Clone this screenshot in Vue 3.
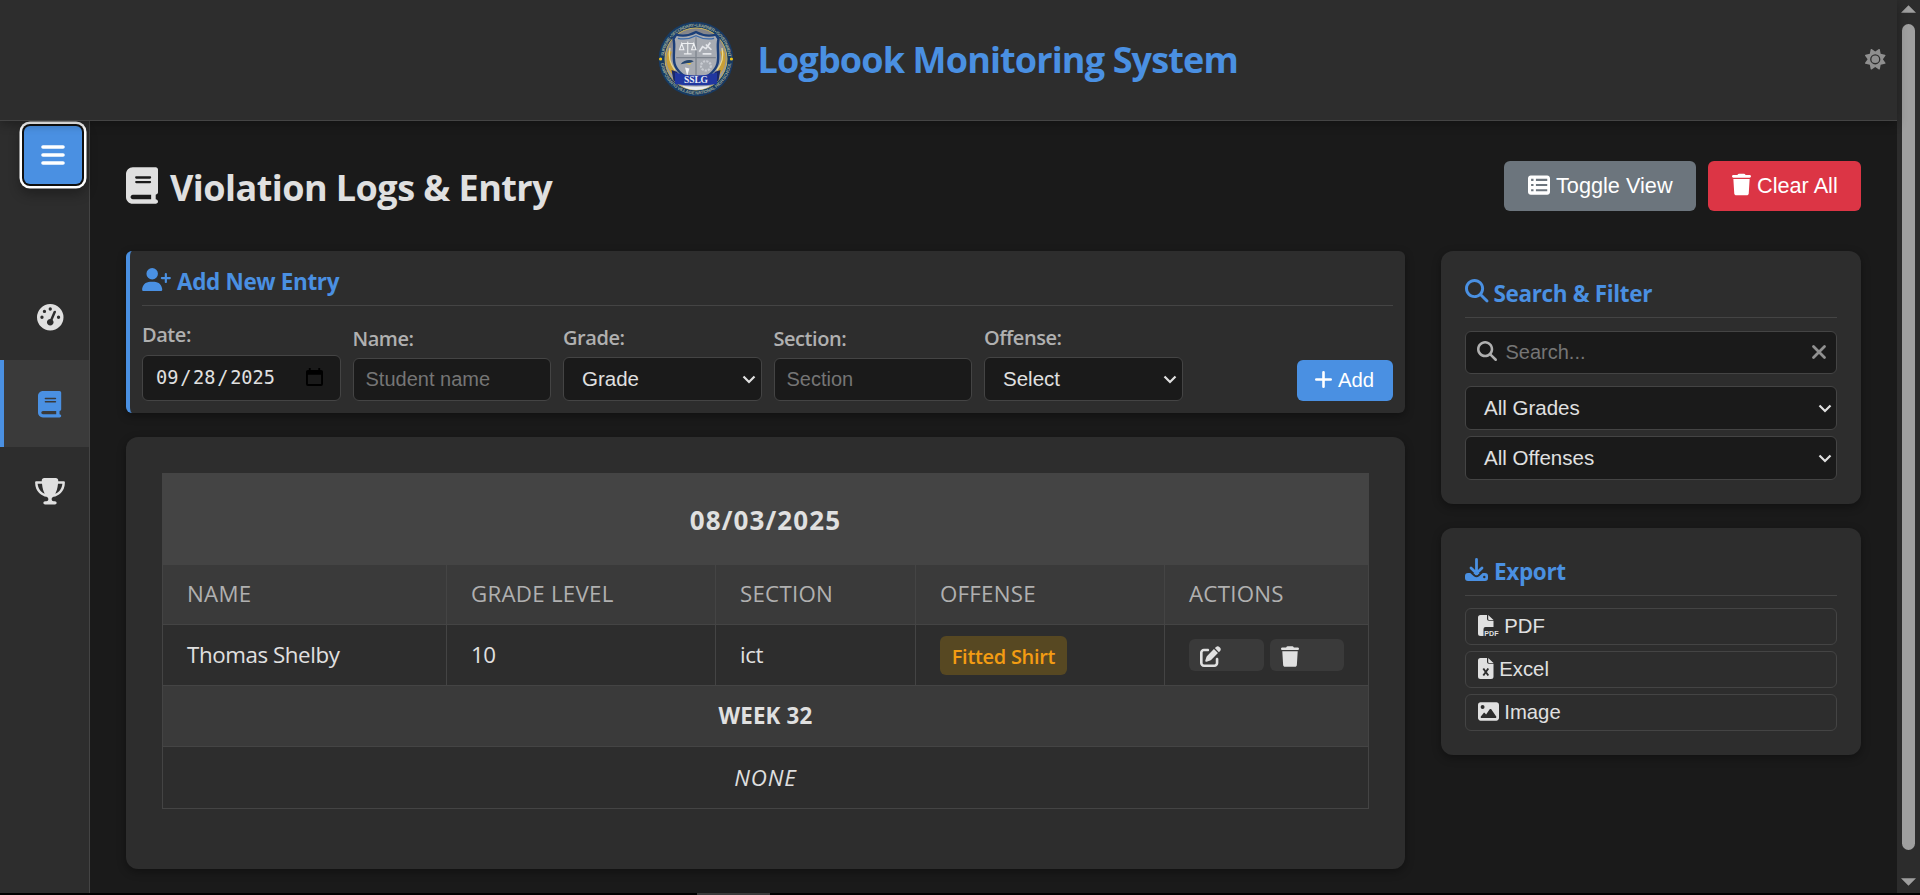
<script setup>
const paths = {
  book: { w: 448, d: 'M96 0C43 0 0 43 0 96V416c0 53 43 96 96 96H384h32c17.7 0 32-14.3 32-32s-14.3-32-32-32V384c17.7 0 32-14.3 32-32V32c0-17.7-14.3-32-32-32H384 96zm0 384H352v64H96c-17.7 0-32-14.3-32-32s14.3-32 32-32zm32-240c0-8.8 7.2-16 16-16H336c8.8 0 16 7.2 16 16s-7.2 16-16 16H144c-8.8 0-16-7.2-16-16zm16 48H336c8.8 0 16 7.2 16 16s-7.2 16-16 16H144c-8.8 0-16-7.2-16-16s7.2-16 16-16z' },
  gauge: { w: 512, d: 'M0 256a256 256 0 1 1 512 0A256 256 0 1 1 0 256zM288 96a32 32 0 1 0 -64 0 32 32 0 1 0 64 0zM256 416c35.3 0 64-28.7 64-64c0-17.4-6.9-33.1-18.1-44.6L366 161.7c5.3-12.1-.2-26.3-12.3-31.6s-26.3 .2-31.6 12.3L257.9 288c-.6 0-1.3 0-1.9 0c-35.3 0-64 28.7-64 64s28.7 64 64 64zM176 144a32 32 0 1 0 -64 0 32 32 0 1 0 64 0zM96 288a32 32 0 1 0 0-64 32 32 0 1 0 0 64zm352-32a32 32 0 1 0 -64 0 32 32 0 1 0 64 0z' },
  trophy: { w: 576, d: 'M400 0H176c-26.5 0-48.1 21.8-47.1 48.2c.2 5.3 .4 10.6 .7 15.8H24C10.7 64 0 74.7 0 88c0 92.6 33.5 157 78.5 200.7c44.3 43.1 98.3 64.8 138.1 75.8c23.4 6.5 39.4 26 39.4 45.6c0 20.9-17 37.9-37.9 37.9H192c-17.7 0-32 14.3-32 32s14.3 32 32 32H384c17.7 0 32-14.3 32-32s-14.3-32-32-32H357.9C337 448 320 431 320 410.1c0-19.6 15.9-39.2 39.4-45.6c39.9-11 93.9-32.7 138.2-75.8C542.5 245 576 180.6 576 88c0-13.3-10.7-24-24-24H446.4c.3-5.2 .5-10.4 .7-15.8C448.1 21.8 426.5 0 400 0zM48.9 112h84.4c9.1 90.1 29.2 150.3 51.9 190.6c-24.9-11-50.8-26.5-73.2-48.3c-32-31.1-58-76-63-142.3zM464.1 254.3c-22.4 21.8-48.3 37.3-73.2 48.3c22.7-40.3 42.8-100.5 51.9-190.6h84.4c-5.1 66.3-31.1 111.2-63 142.3z' },
  sun: { w: 512, d: 'M361.5 1.2c5 2.1 8.6 6.6 9.6 11.9L391 121l107.9 19.8c5.3 1 9.8 4.6 11.9 9.6s1.5 10.7-1.6 15.2L446.9 256l62.3 90.3c3.1 4.5 3.7 10.2 1.6 15.2s-6.6 8.6-11.9 9.6L391 391 371.1 498.9c-1 5.3-4.6 9.8-9.6 11.9s-10.7 1.5-15.2-1.6L256 446.9l-90.3 62.3c-4.5 3.1-10.2 3.7-15.2 1.6s-8.6-6.6-9.6-11.9L121 391 13.1 371.1c-5.3-1-9.8-4.6-11.9-9.6s-1.5-10.7 1.6-15.2L65.1 256 2.8 165.7c-3.1-4.5-3.7-10.2-1.6-15.2s6.6-8.6 11.9-9.6L121 121 140.9 13.1c1-5.3 4.6-9.8 9.6-11.9s10.7-1.5 15.2 1.6L256 65.1 346.3 2.8c4.5-3.1 10.2-3.7 15.2-1.6zM160 256a96 96 0 1 1 192 0 96 96 0 1 1 -192 0zm224 0a128 128 0 1 0 -256 0 128 128 0 1 0 256 0z' },
  userPlus: { w: 640, d: 'M96 128a128 128 0 1 1 256 0A128 128 0 1 1 96 128zM0 482.3C0 383.8 79.8 304 178.3 304h91.4C368.2 304 448 383.8 448 482.3c0 16.4-13.3 29.7-29.7 29.7H29.7C13.3 512 0 498.7 0 482.3zM504 312V248H440c-13.3 0-24-10.7-24-24s10.7-24 24-24h64V136c0-13.3 10.7-24 24-24s24 10.7 24 24v64h64c13.3 0 24 10.7 24 24s-10.7 24-24 24H552v64c0 13.3-10.7 24-24 24s-24-10.7-24-24z' },
  search: { w: 512, d: 'M416 208c0 45.9-14.9 88.3-40 122.7L502.6 457.4c12.5 12.5 12.5 32.8 0 45.3s-32.8 12.5-45.3 0L330.7 376c-34.4 25.2-76.8 40-122.7 40C93.1 416 0 322.9 0 208S93.1 0 208 0S416 93.1 416 208zM208 352a144 144 0 1 0 0-288 144 144 0 1 0 0 288z' },
  trash: { w: 448, d: 'M135.2 17.7L128 32H32C14.3 32 0 46.3 0 64S14.3 96 32 96H416c17.7 0 32-14.3 32-32s-14.3-32-32-32H320l-7.2-14.3C307.4 6.8 296.3 0 284.2 0H163.8c-12.1 0-23.2 6.8-28.6 17.7zM416 128H32L53.2 467c1.6 25.3 22.6 45 47.9 45H346.9c25.3 0 46.3-19.7 47.9-45L416 128z' },
  edit: { w: 512, d: 'M471.6 21.7c-21.9-21.9-57.3-21.9-79.2 0L362.3 51.7l97.9 97.9 30.1-30.1c21.9-21.9 21.9-57.3 0-79.2L471.6 21.7zm-299.2 220c-6.1 6.1-10.8 13.6-13.5 21.9l-29.6 88.8c-2.9 8.6-.6 18.1 5.8 24.6s15.9 8.7 24.6 5.8l88.8-29.6c8.2-2.7 15.7-7.4 21.9-13.5L437.7 172.3 339.7 74.3 172.4 241.7zM96 64C43 64 0 107 0 160V416c0 53 43 96 96 96H352c53 0 96-43 96-96V320c0-17.7-14.3-32-32-32s-32 14.3-32 32v96c0 17.7-14.3 32-32 32H96c-17.7 0-32-14.3-32-32V160c0-17.7 14.3-32 32-32h96c17.7 0 32-14.3 32-32s-14.3-32-32-32H96z' },
  image: { w: 512, d: 'M0 96C0 60.7 28.7 32 64 32H448c35.3 0 64 28.7 64 64V416c0 35.3-28.7 64-64 64H64c-35.3 0-64-28.7-64-64V96zM323.8 202.5c-4.5-6.6-11.9-10.5-19.8-10.5s-15.4 3.9-19.8 10.5l-87 127.6L170.7 297c-4.6-5.7-11.5-9-18.7-9s-14.2 3.3-18.7 9l-64 80c-5.8 7.2-6.9 17.1-2.9 25.4s12.4 13.6 21.6 13.6h96 32H424c8.9 0 17.1-4.9 21.2-12.8s3.6-17.4-1.4-24.7l-120-176zM112 192a48 48 0 1 0 0-96 48 48 0 1 0 0 96z' },
  list: { w: 512, d: 'M64 32H448c35 0 64 29 64 64V416c0 35-29 64-64 64H64c-35 0-64-29-64-64V96c0-35 29-64 64-64zM72 112v48h56v-48zM184 112v48h264v-48zM72 232v48h56v-48zM184 232v48h264v-48zM72 352v48h56v-48zM184 352v48h264v-48z' },
}
const nav = ['gauge', 'book', 'trophy']
const headers = ['NAME', 'GRADE LEVEL', 'SECTION', 'OFFENSE', 'ACTIONS']
const filters = ['All Grades', 'All Offenses']
</script>

<template>
  <div class="screen">
    <div class="app">
      <header class="topbar">
        <svg class="logo" viewBox="0 0 76 76">
          <defs>
            <radialGradient id="disc" cx="50%" cy="65%" r="60%">
              <stop offset="0" stop-color="#d2d3d8" />
              <stop offset="1" stop-color="#858589" />
            </radialGradient>
            <path id="arcTop" d="M5.800 38a32.200 32.200 0 0 1 64.400 0" />
            <path id="arcBottom" d="M2.600 38a35.400 35.400 0 0 0 70.800 0" />
          </defs>
          <circle cx="38" cy="38" r="37.300" fill="#173a63" />
          <circle cx="38" cy="38" r="31" fill="url(#disc)" stroke="#c9b35a" stroke-width="1" />
          <text class="ring"><textPath href="#arcTop" textLength="96" startOffset="3">SUPREME • SECONDARY • LEARNER • GOVERNMENT</textPath></text>
          <text class="ring"><textPath href="#arcBottom" textLength="103" startOffset="4">CAMPOSANTO VILLAGE NATIONAL HIGH SCHOOL</textPath></text>
          <circle cx="2.600" cy="38" r="1.600" fill="#f0c419" />
          <circle cx="73.400" cy="38" r="1.600" fill="#f0c419" />
          <path d="M12 30c-4 10 0 21 8 25M64 30c4 10 0 21-8 25" fill="none" stroke="#c99f35" stroke-width="4" />
          <path d="M12 27c-2 9 1 17 5 22M64 27c2 9-1 17-5 22" fill="none" stroke="#ead98b" stroke-width="1.300" />
          <g transform="translate(38 36) scale(1.1 1.04) translate(-38 -36)">
            <path d="M20 14.500c6 2 12 1 18-2.500c6 3.500 12 4.500 18 2.500l2.500 4c-2 8 1 16-1 24c-2 8-11 14-19.500 18c-8.500-4-17.500-10-19.500-18c-2-8 1-16-1-24z" fill="#a7abb2" stroke="#1c3f78" stroke-width="2.200" />
            <path d="M21.500 18c6 1.500 11 .5 16.500-2.500c5.500 3 10.500 4 16.500 2.500" fill="none" stroke="#3c6aa8" stroke-width="1.200" />
            <path d="M38 17v40M20 36.500h36" stroke="#7f858e" stroke-width="1.200" />
            <path d="M30.500 21v12M27 33h7M25 23h11M25 23l-2 6h4zM36 23l-2 6h4z" stroke="#eef0f2" stroke-width="1" fill="none" />
            <path d="M41 31l3-5 3 2 4-6M44 33h8M47 24l5 5" stroke="#e4e6ea" stroke-width="1.600" fill="none" />
            <path d="M24 43c3-4 8-5 12-3l-3 1.500c-3 0-5 1-9 1.500z" fill="#26466e" />
            <path d="M29 42.500l5-1-1.500 2z" fill="#e8c33c" />
            <path d="M28 46l4 1-2 7z" fill="#f2f3f5" />
            <circle cx="47" cy="44.500" r="4.500" fill="none" stroke="#c9ccd2" stroke-width="2" stroke-dasharray="2 1" />
          </g>
          <path d="M13.500 49l6 2v12l-4-3.500zM62.500 49l-6 2v12l4-3.500z" fill="#1a2868" />
          <path d="M17 51.500q21 6 42 0V63q-21 3-42 0z" fill="#2137a0" />
          <text x="38" y="62.300" class="banner" textLength="24">SSLG</text>
          <path d="M24 65q14 1.500 28 0q-6 4-14 4t-14-4z" fill="#e9ebf0" />
        </svg>
        <h1>Logbook Monitoring System</h1>
        <svg class="sun" viewBox="0 0 512 512"><path :d="paths.sun.d" /></svg>
      </header>

      <div class="body">
        <aside class="sidebar">
          <button class="burger">
            <svg viewBox="0 0 24 20"><path d="M2 2h20M2 10h20M2 18h20" /></svg>
          </button>
          <nav>
            <a v-for="n in nav" :key="n" :class="['item', n, { active: n === 'book' }]">
              <svg :viewBox="`0 0 ${paths[n].w} 512`"><path :d="paths[n].d" fill-rule="evenodd" /></svg>
            </a>
          </nav>
        </aside>

        <main>
          <div class="head">
            <svg class="head-icon" viewBox="0 0 448 512"><path :d="paths.book.d" /></svg>
            <h2>Violation Logs &amp; Entry</h2>
            <button class="btn grey">
              <svg class="i-list" viewBox="0 32 512 448"><path :d="paths.list.d" fill-rule="evenodd" /></svg><span>Toggle View</span>
            </button>
            <button class="btn red">
              <svg class="i-trash" viewBox="0 0 448 512"><path :d="paths.trash.d" /></svg><span>Clear All</span>
            </button>
          </div>

          <div class="columns">
            <div class="left">
              <section class="card form">
                <h3>
                  <svg class="i-user" viewBox="0 0 640 512"><path :d="paths.userPlus.d" /></svg><span>Add New Entry</span>
                </h3>
                <div class="fields">
                  <div class="field">
                    <label>Date:</label>
                    <div class="control date">
                      <span>09</span><i>/</i><span>28</span><i>/</i><span>2025</span>
                      <svg viewBox="0 0 18 20"><path d="M3 0h2v2h8V0h2v2h1a2 2 0 0 1 2 2v13a2 2 0 0 1-2 2H2a2 2 0 0 1-2-2V4a2 2 0 0 1 2-2h1zM2 7v10h14V7z" fill-rule="evenodd" /></svg>
                    </div>
                  </div>
                  <div class="field">
                    <label>Name:</label>
                    <div class="control input">Student name</div>
                  </div>
                  <div class="field">
                    <label>Grade:</label>
                    <div class="control select">Grade<svg viewBox="0 0 14 9"><path d="M1.500 1.500L7 7l5.500-5.500" /></svg></div>
                  </div>
                  <div class="field">
                    <label>Section:</label>
                    <div class="control input">Section</div>
                  </div>
                  <div class="field">
                    <label>Offense:</label>
                    <div class="control select">Select<svg viewBox="0 0 14 9"><path d="M1.500 1.500L7 7l5.500-5.500" /></svg></div>
                  </div>
                  <button class="add">
                    <svg viewBox="0 0 17 17"><path d="M8.500 1.300v14.400M1.300 8.500h14.400" /></svg><span>Add</span>
                  </button>
                </div>
              </section>

              <section class="card log">
                <table>
                  <colgroup>
                    <col class="c1"><col class="c2"><col class="c3"><col class="c4"><col class="c5">
                  </colgroup>
                  <tbody>
                    <tr class="r-date"><td colspan="5"><span>08/03/2025</span></td></tr>
                    <tr class="r-head"><th v-for="h in headers" :key="h">{{ h }}</th></tr>
                    <tr class="r-row">
                      <td><span>Thomas Shelby</span></td>
                      <td>10</td>
                      <td>ict</td>
                      <td><div class="badge">Fitted Shirt</div></td>
                      <td>
                        <div class="actions">
                          <button class="mini"><svg class="m-edit" viewBox="0 0 512 512"><path :d="paths.edit.d" /></svg></button>
                          <button class="mini"><svg class="m-trash" viewBox="0 0 448 512"><path :d="paths.trash.d" /></svg></button>
                        </div>
                      </td>
                    </tr>
                    <tr class="r-week"><td colspan="5"><span>WEEK 32</span></td></tr>
                    <tr class="r-none"><td colspan="5"><span>NONE</span></td></tr>
                  </tbody>
                </table>
              </section>
            </div>

            <div class="right">
              <section class="card side search-card">
                <h3>
                  <svg class="i-search" viewBox="0 0 512 512"><path :d="paths.search.d" /></svg><span>Search &amp; Filter</span>
                </h3>
                <div class="control search">
                  <svg class="mag" viewBox="0 0 512 512"><path :d="paths.search.d" /></svg>
                  <span>Search...</span>
                  <svg class="x" viewBox="0 0 14 14"><path d="M1.500 1.500l11 11M12.500 1.500l-11 11" /></svg>
                </div>
                <div v-for="f in filters" :key="f" class="control select">{{ f }}<svg viewBox="0 0 14 9"><path d="M1.500 1.500L7 7l5.500-5.500" /></svg></div>
              </section>

              <section class="card side export-card">
                <h3>
                  <svg class="i-down" viewBox="0 0 23 23">
                    <path d="M3 15h17a3 3 0 0 1 3 3v2a3 3 0 0 1-3 3H3a3 3 0 0 1-3-3v-2a3 3 0 0 1 3-3z" />
                    <path class="cut" d="M4.500 13l5 4.500q2 1.500 4 0l5-4.500" />
                    <path class="arrow" d="M11.500 1.500v13.500M6 10l5.500 5.300L17 10" />
                    <circle class="dot" cx="19.300" cy="19" r="1.200" />
                  </svg><span>Export</span>
                </h3>
                <button class="export">
                  <svg class="f-pdf" viewBox="0 0 21 21">
                    <path d="M2.500 0H9v4a1.800 1.800 0 0 0 1.800 1.800H15.500V12H7.500A2 2 0 0 0 5.500 14v7H2.500A2.500 2.500 0 0 1 0 18.500v-16A2.500 2.500 0 0 1 2.500 0zM10.200 0l5.300 5h-4.300a1 1 0 0 1-1-1z" />
                    <text x="6.300" y="20.600" textLength="14.200" lengthAdjust="spacingAndGlyphs">PDF</text>
                  </svg><span>PDF</span>
                </button>
                <button class="export">
                  <svg class="f-xls" viewBox="0 0 16 21">
                    <path d="M2.500 0H9v4a1.800 1.800 0 0 0 1.800 1.800H15.500V18.500a2.500 2.500 0 0 1-2.500 2.500H2.500A2.500 2.500 0 0 1 0 18.500v-16A2.500 2.500 0 0 1 2.500 0zM10.200 0l5.300 5h-4.300a1 1 0 0 1-1-1z" />
                    <path class="xx" d="M5.300 10.500l5 7M10.300 10.500l-5 7" />
                  </svg><span>Excel</span>
                </button>
                <button class="export">
                  <svg class="f-img" viewBox="0 32 512 448"><path :d="paths.image.d" fill-rule="evenodd" /></svg><span>Image</span>
                </button>
              </section>
            </div>
          </div>
        </main>
      </div>
      <div class="scrollbar">
        <svg viewBox="0 0 16 8"><path d="M0 8L8 0l8 8z" /></svg>
        <div class="thumb"></div>
        <svg class="down" viewBox="0 0 16 8"><path d="M0 0h16L8 8z" /></svg>
      </div>
    </div>
    <div class="edge"><div></div></div>
  </div>
</template>

<style>
html, body { background: #000; overflow: hidden; }
</style>

<style scoped>
* { box-sizing: border-box; }
.screen { width: 1920px; height: 895px; font-family: "Open Sans", "Noto Sans", sans-serif; color: #e0e0e0; background: #000; overflow: hidden; }
.app { display: grid; grid-template-columns: 1897px 23px; grid-template-rows: 121px 772px; background: #1a1a1a; }
svg { display: block; fill: currentColor; flex: none; overflow: visible; }
h1, h2, h3 { margin: 0; white-space: nowrap; }
button { border: 0; margin: 0; padding: 0; color: inherit; font: inherit; }

.topbar { position: relative; z-index: 2; grid-column: 1; background: #2d2d2d; border-bottom: 1px solid #444; box-shadow: 0 3px 10px rgba(0,0,0,.3); display: flex; align-items: center; justify-content: center; gap: 24px; padding-bottom: 3px; }
.logo { width: 76px; height: 76px; }
.ring { font: bold 4.500px "Liberation Sans", sans-serif; fill: #9aa593; }
.banner { font: bold 9.500px "Liberation Serif", serif; fill: #e8ecf7; text-anchor: middle; }
h1 { font-size: 36px; line-height: 48px; font-weight: 700; letter-spacing: -.860px; color: #4a90e2; width: 482px; padding-top: 3px; }
.sun { position: absolute; right: 12px; top: 48.500px; width: 20.500px; height: 20.500px; color: #8f8f8f; }

.body { grid-column: 1; display: flex; }
.sidebar { width: 90px; flex: none; background: #2d2d2d; border-right: 1px solid #444; }
.burger { margin: 4.500px 0 0 24px; width: 58px; height: 58px; border-radius: 6px; background: #4a90e2; color: #fff; display: flex; align-items: center; justify-content: center; box-shadow: 0 0 0 2px #101010, 0 0 0 4.500px #fff, 0 6px 12px 4px rgba(0,0,0,.3); }
.burger svg { width: 24px; height: 20px; stroke: currentColor; stroke-width: 3.600; stroke-linecap: round; }
nav { margin-top: 89.500px; }
.item { height: 87px; border-left: 4px solid transparent; padding-left: 7px; display: flex; align-items: center; justify-content: center; }
.item.active { background: #3a3a3a; border-color: #4a90e2; color: #4a90e2; }
.item svg { height: 26.500px; position: relative; top: .5px; }
.item.trophy svg { width: 30px; }

main { flex: 1; padding: 40px 36px 0; }
.head { display: flex; align-items: center; height: 50px; }
.head-icon { width: 32px; height: 37px; margin-top: -1px; }
h2 { margin-left: 12px; flex: 1; font-size: 36px; line-height: 48px; font-weight: 700; letter-spacing: -.550px; padding-top: 3px; }
.btn { height: 50px; border-radius: 6px; color: #fff; font: 21.700px/28px "Liberation Sans", Arial, sans-serif; display: flex; align-items: center; padding: 0 24px; gap: 6px; white-space: nowrap; }
.btn.grey { width: 192px; background: #6c757d; margin-right: 12px; }
.btn.red { width: 153px; background: #dc3545; }
.i-list { width: 22px; height: 20px; margin-top: -2px; }
.i-trash { width: 19px; height: 23px; margin-top: -3px; }

.columns { display: flex; gap: 36px; margin-top: 40px; align-items: flex-start; }
.left { width: 1279px; display: flex; flex-direction: column; gap: 24px; }
.right { width: 420px; display: flex; flex-direction: column; gap: 24px; }
.card { background: #2d2d2d; box-shadow: 0 3px 8px rgba(0,0,0,.35); }
.form { height: 162px; border-left: 4px solid #4a90e2; border-radius: 6px; padding: 12px; }
h3 { display: flex; align-items: center; font-size: 22.500px; font-weight: 700; letter-spacing: -.350px; color: #4a90e2; border-bottom: 1px solid #444; }
h3 span { position: relative; top: 1.300px; }
.form h3 { height: 43px; padding-bottom: 7px; }
.i-user { width: 29px; height: 23px; margin: -3px 6px 0 0; }

.fields { display: flex; align-items: flex-end; gap: 12px; height: 95px; }
.field { width: 198.500px; }
label { display: block; font-size: 20px; line-height: 27px; font-weight: 600; letter-spacing: -.450px; color: #b0b0b0; margin-bottom: 6.500px; }
.control { border: 1.500px solid #444; border-radius: 6px; background: #1a1a1a; font: 20px/40px "Liberation Sans", Arial, sans-serif; height: 43px; padding: 0 12px; color: #757575; white-space: nowrap; }
.control.select { height: 44px; padding: 0 4.500px 0 18px; color: #e0e0e0; font-size: 20.500px; display: flex; align-items: center; justify-content: space-between; }
.control.select svg { width: 14px; height: 9px; fill: none; stroke: #e0e0e0; stroke-width: 2.200; }
.control.date { height: 46.500px; display: flex; align-items: center; font: 18.600px/44px "DejaVu Sans Mono", monospace; color: #e0e0e0; padding: 0 17px 0 13px; }
.date i { font-style: normal; margin: 0 1.600px 0 1.900px; }
.date svg { width: 17px; height: 19px; margin-left: auto; color: #000; margin-top: -1px; }
.add { margin-left: auto; width: 96px; height: 41px; border-radius: 6px; background: #4a90e2; color: #fff; display: flex; align-items: center; padding-left: 18px; gap: 6px; font: 20.300px/24px "Liberation Sans", Arial, sans-serif; }
.add svg { width: 17px; height: 17px; stroke: #fff; stroke-width: 2.600; stroke-linecap: round; margin-top: -2px; }
.add span { margin-top: -1px; }

.log { height: 432px; border-radius: 12px; padding: 36px; }
table { width: 1207px; border-collapse: collapse; table-layout: fixed; font-size: 22.300px; line-height: 30px; }
.c1 { width: 284px; } .c2 { width: 269px; } .c3 { width: 200px; } .c4 { width: 249px; } .c5 { width: 204px; }
td, th { border: 1px solid #444; padding: 0 0 0 24px; text-align: left; font-weight: 400; white-space: nowrap; }
td[colspan] { text-align: center; padding: 0; }
.r-date { height: 91px; background: #444; font-size: 26px; letter-spacing: 1.100px; }
.r-date td { font-weight: 700; padding-top: 1px; }
.r-head { height: 60px; background: #3a3a3a; }
.r-head th { color: #b0b0b0; font-weight: 500; letter-spacing: .250px; padding-bottom: 1px; }
.r-row { height: 61px; letter-spacing: -.400px; }
.r-week { height: 61px; background: #3a3a3a; }
.r-week td { font-weight: 700; letter-spacing: .200px; }
.r-none { height: 62px; font-style: italic; letter-spacing: .900px; }
.badge { width: 127px; height: 39px; border-radius: 6px; background: #574822; color: #f39c12; font-size: 20px; line-height: 41px; font-weight: 600; letter-spacing: -.300px; text-align: center; }
.actions { display: flex; gap: 6px; }
.mini { width: 74.500px; height: 32px; border-radius: 6px; background: #3a3a3a; padding: 5px 0 0 11px; }
.mini svg { margin-top: -2px; }
.m-edit { width: 21px; height: 21px; }
.m-trash { width: 18px; height: 21px; }

.side { border-radius: 12px; padding: 24px; }
.search-card { height: 253px; }
.export-card { height: 227px; }
.side h3 { height: 43px; padding-bottom: 7px; }
.i-search { width: 23.500px; height: 23.500px; margin: -3px 5px 0 0; }
.i-down { width: 23px; height: 23px; margin: -2px 6px 0 0; }
.i-down .cut { fill: none; stroke: #2d2d2d; stroke-width: 2; }
.i-down .arrow { fill: none; stroke: #4a90e2; stroke-width: 2.800; stroke-linecap: round; stroke-linejoin: round; }
.i-down .dot { fill: #2d2d2d; }
.search { margin-top: 13px; display: flex; align-items: center; padding: 0 10px 0 10.500px; }
.search span { margin: -1px auto 0 9px; }
.mag { width: 20px; height: 20px; color: #b0b0b0; margin-top: -3px; }
.x { width: 14px; height: 14px; stroke: #909090; stroke-width: 2.800; stroke-linecap: round; margin-top: -2px; }
.search + .select { margin-top: 12px; }
.select + .select { margin-top: 6px; }
.export { width: 372px; height: 37px; border: 1.500px solid #444; border-radius: 6px; background: #2d2d2d; display: flex; align-items: center; padding: 0 11.800px; margin-bottom: 6px; font: 20.300px/26px "Liberation Sans", Arial, sans-serif; }
.export-card h3 { margin-bottom: 13px; height: 44px; }
.export-card { padding-bottom: 23px; }
.export span { margin-left: 5.500px; position: relative; top: -1px; }
.f-pdf { width: 21px; height: 21px; margin-top: -2px; }
.f-pdf text { font: bold 7.500px "Liberation Sans", sans-serif; fill: #e0e0e0; }
.f-xls { width: 16px; height: 21px; margin-top: -2px; }
.f-xls .xx { stroke: #2d2d2d; stroke-width: 1.900; fill: none; }
.f-img { width: 21px; height: 19px; margin-top: -2px; }
.export-card h3 + .export { margin-top: -1px; }

.scrollbar { grid-column: 2; grid-row: 1 / 3; background: #2c2c2c; display: flex; flex-direction: column; align-items: center; padding: 5px 0 7px; color: #9f9f9f; }
.scrollbar svg { width: 15px; height: 8px; }
.thumb { width: 13px; height: 826px; margin-top: 11px; border-radius: 7px; background: #9f9f9f; }
.scrollbar .down { margin-top: auto; }
.edge { height: 2px; padding-left: 697px; }
.edge div { width: 73px; height: 2px; background: #3a3a3a; }
</style>
